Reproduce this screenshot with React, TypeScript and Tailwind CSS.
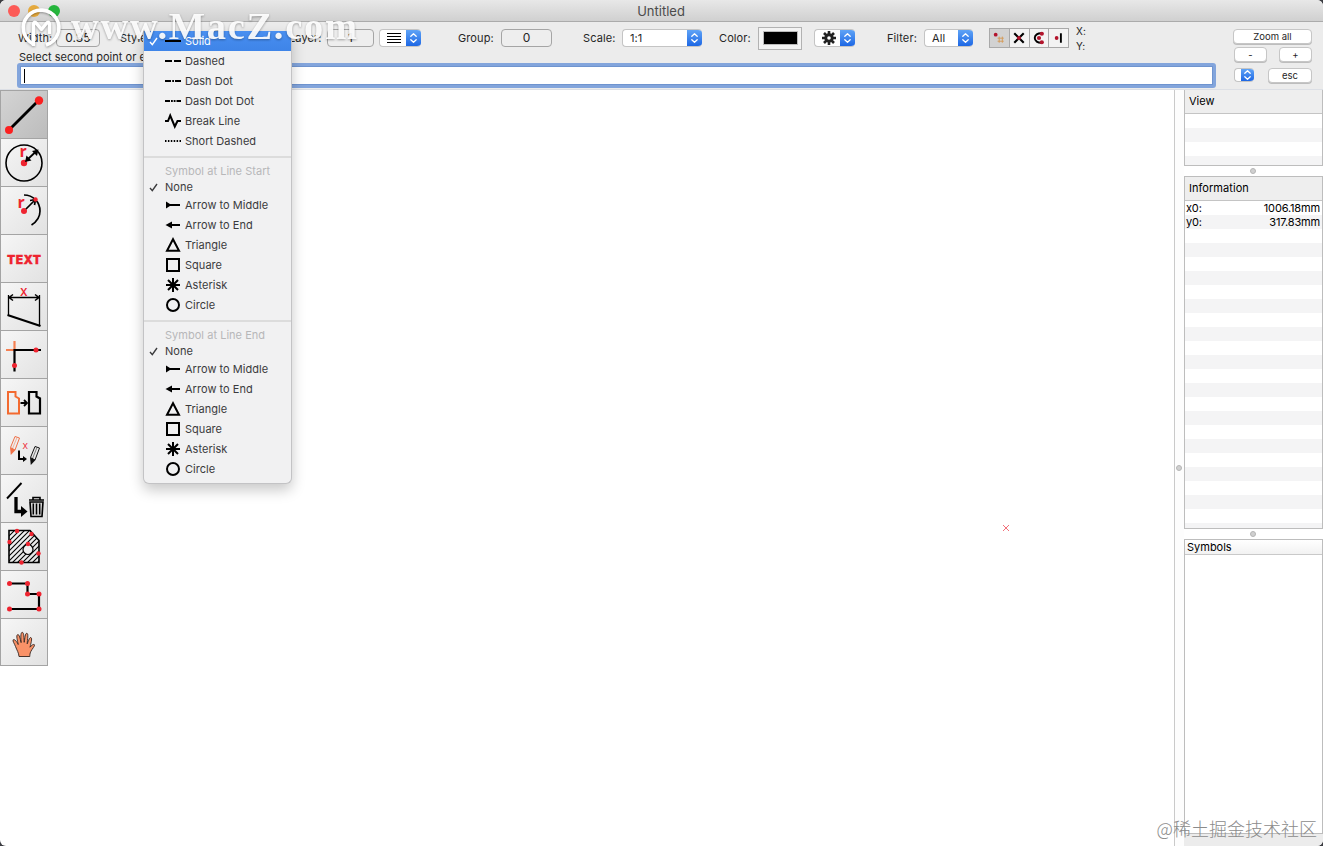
import type { ReactNode } from "react";
import clsx from "clsx";

const RED = "#ee2430";

/* ---------- Small controls ---------- */

const Chevrons = ({ className }: { className?: string }) => (
	<span
		className={clsx(
			"flex h-full shrink-0 items-center justify-center bg-gradient-to-b from-[#5fa3f6] to-[#1d67e4]",
			className
		)}>
		<svg width="9" height="12" viewBox="0 0 9 12" fill="none" stroke="#fff" strokeWidth="1.3">
			<path d="M1.8 4.3 4.5 1.8 7.2 4.3M1.8 7.7l2.7 2.5 2.7-2.5" strokeLinecap="round" strokeLinejoin="round" />
		</svg>
	</span>
);

const Popup = ({ children, className }: { children?: ReactNode; className?: string }) => (
	<div
		className={clsx(
			"flex h-[18px] shrink-0 items-center justify-between overflow-hidden rounded-[4px] border border-r-0 border-[#c4c4c4] bg-white",
			className
		)}>
		{children}
		<Chevrons className="w-[15px]" />
	</div>
);

const Field = ({ value, className }: { value: string; className?: string }) => (
	<div
		className={clsx(
			"flex h-[18px] shrink-0 items-center justify-center rounded-[4px] border border-[#a5a5a5] bg-[#eeeeee] text-[12px]",
			className
		)}>
		{value}
	</div>
);

const Label = ({ children, className }: { children: ReactNode; className?: string }) => (
	<span className={clsx("shrink-0 whitespace-nowrap", className)}>{children}</span>
);

const PushButton = ({ children, className }: { children: ReactNode; className?: string }) => (
	<button
		className={clsx(
			"flex h-[15px] items-center justify-center rounded-[4px] border border-[#c6c6c6] bg-white text-[9.5px] leading-none tracking-normal shadow-[0_1px_0_#bdbdbd]",
			className
		)}>
		{children}
	</button>
);

/* ---------- Snap buttons ---------- */

const snaps: ReactNode[] = [
	<g key="grid">
		<circle cx="6" cy="6" r="2" fill="#b3142c" />
		<path d="M9.7 8v6.5M13 8v6.5M8 9.7h6.5M8 12.9h6.5" stroke="#d59b58" strokeWidth="1" />
	</g>,
	<g key="cross">
		<path d="m4.500 4.500 10 10M14.500 4.500l-10 10" stroke="#000" strokeWidth="2.200" />
		<circle cx="9.5" cy="9.5" r="2.200" fill="#b3142c" />
	</g>,
	<g key="arc">
		<path d="M13 4.5C8 4 5 6.500 5 9.500s3 5.500 8 5" stroke="#000" strokeWidth="2" fill="none" />
		<g fill="#b3142c">
			<circle cx="12.500" cy="5" r="2.200" />
			<circle cx="9.500" cy="9.500" r="2.200" />
			<circle cx="12.500" cy="14" r="2.200" />
		</g>
	</g>,
	<g key="end">
		<circle cx="7" cy="9.500" r="2" fill="#b3142c" />
		<path d="M11.500 4.500v10" stroke="#000" strokeWidth="2" />
	</g>,
];

/* ---------- Drawing tools ---------- */

const Pencil = ({ color }: { color: string }) => (
	<>
		<path d="m5 1 4.500 1.500-4.500 12-4.500-2.500z" fill="none" stroke={color} strokeWidth="1" />
		<path d="M7 2 2.500 13" stroke={color} strokeWidth=".5" />
		<path d="m0 12 5.500 2.500L.800 19.500z" fill={color} />
	</>
);

const tools: { name: string; art: ReactNode }[] = [
	{
		name: "Line",
		art: (
			<>
				<path d="M9 38 39 8" stroke="#000" strokeWidth="2.800" />
				<circle cx="9" cy="38" r="4" fill="#fb2020" />
				<circle cx="39" cy="8.500" r="4.200" fill="#fb2020" />
			</>
		),
	},
	{
		name: "Circle",
		art: (
			<>
				<circle cx="24" cy="23" r="18" fill="none" stroke="#000" strokeWidth="1.600" />
				<circle cx="24" cy="23" r="3.200" fill={RED} />
				<path d="m27 20 9.500-9" stroke="#000" strokeWidth="1.800" />
				<path d="m25 22 1.500-6.500 5 5zM38.500 9.500l-6.500 1.500 5 5z" />
				<text x="19.500" y="17" fontSize="16" fontWeight="700" fill={RED} fontFamily="Open Sans, sans-serif">r</text>
			</>
		),
	},
	{
		name: "Arc",
		art: (
			<>
				<path d="M24 7c9 0 16 7 16 16 0 5.500-3 10.500-8.500 14" fill="none" stroke="#000" strokeWidth="1.700" />
				<circle cx="24" cy="23" r="3" fill={RED} />
				<path d="m26 21 9-9M30 12.500l5.500-1-1 5.500" fill="none" stroke="#000" strokeWidth="1.700" />
				<circle cx="35.500" cy="11.500" r="2.200" fill={RED} />
				<text x="17.500" y="19.500" fontSize="16" fontWeight="700" fill={RED} fontFamily="Open Sans, sans-serif">r</text>
			</>
		),
	},
	{
		name: "Text",
		art: (
			<text x="7" y="27.500" fontSize="12" fontWeight="900" fill={RED} stroke={RED} strokeWidth=".3" textLength="34" fontFamily="Inter, sans-serif">TEXT</text>
		),
	},
	{
		name: "Dimension",
		art: (
			<>
				<path d="M8.500 11v20M39.500 11v31" stroke="#000" strokeWidth="1.300" />
				<path d="M9 13.500h30M13 10.500l-4 3 4 3M35 10.500l4 3-4 3" fill="none" stroke="#000" strokeWidth="1.500" />
				<path d="m7.500 31 33 11" stroke="#000" strokeWidth="2.300" />
				<text x="20" y="11.500" fontSize="10.500" fontWeight="600" fill={RED} fontFamily="Inter, sans-serif">X</text>
			</>
		),
	},
	{
		name: "Trim",
		art: (
			<>
				<path d="M6 18h9M14.500 9v9" stroke="#f58052" strokeWidth="2.200" />
				<path d="M14.500 39.500V18H41" fill="none" stroke="#000" strokeWidth="2.200" />
				<circle cx="36" cy="18" r="2.500" fill={RED} />
				<circle cx="14.500" cy="33.500" r="2.500" fill={RED} />
			</>
		),
	},
	{
		name: "Move",
		art: (
			<>
				<path d="M8 12h7.500v4.500l3.500 2v15H8z" fill="none" stroke="#f36a30" strokeWidth="2" />
				<path d="M29 12h7.500v4.500l3.500 2v15H29z" fill="none" stroke="#000" strokeWidth="2.200" />
				<path d="M20.500 23h6m-2.500-3 3 3-3 3" fill="none" stroke="#000" strokeWidth="1.800" />
			</>
		),
	},
	{
		name: "Edit",
		art: (
			<>
				<g transform="translate(10 7.500)"><Pencil color="#ef7047" /></g>
				<g transform="translate(30 17.500)"><Pencil color="#111" /></g>
				<path d="M19 22.500V31h5" fill="none" stroke="#000" strokeWidth="2" />
				<path d="m23 28 4 3-4 3z" />
				<text x="22.500" y="21" fontSize="8" fill={RED} fontFamily="Inter, sans-serif">X</text>
			</>
		),
	},
	{
		name: "Delete",
		art: (
			<>
				<path d="M7 22.500 21.500 7" stroke="#000" strokeWidth="1.900" />
				<path d="M16 21v14.500h6" fill="none" stroke="#000" strokeWidth="3.300" />
				<path d="m21 30 6.500 5.500L21 41z" />
				<path d="M29 24h15M33 23.500v-2h7v2" fill="none" stroke="#000" strokeWidth="1.600" />
				<path d="M30 26h13l-1 14.500H31z" fill="#d5d5d5" stroke="#000" strokeWidth="1.600" />
				<path d="M33.300 27.500v11M36.500 27.500v11M39.700 27.500v11" stroke="#000" strokeWidth="1.500" />
			</>
		),
	},
	{
		name: "Hatch",
		art: (
			<>
				<defs>
					<clipPath id="hatch-area">
						<path d="M9 6.500h21l9 10v22H9z" />
					</clipPath>
				</defs>
				<g clipPath="url(#hatch-area)" stroke="#000" strokeWidth="1.100">
					<path d="M4 17 19 2M4 22 24 2M4 27 29 2M4 32 34 2M4 37 39 2M4 42 44 2M4 47 49 2M9 47 54 2M14 47 59 2M19 47 64 2M24 47 69 2M29 47 74 2M34 47 79 2" />
				</g>
				<path d="M9 6.500h21l9 10v22H9z" fill="none" stroke="#000" strokeWidth="1.600" />
				<circle cx="28" cy="25.500" r="5" fill="#eee" stroke="#000" strokeWidth="1.200" />
				<g fill={RED}>
					<circle cx="17" cy="7" r="2.200" />
					<circle cx="31.500" cy="10" r="2.200" />
					<circle cx="9.500" cy="18" r="2.200" />
					<circle cx="28" cy="20" r="2.200" />
					<circle cx="38.500" cy="29.500" r="2.200" />
					<circle cx="21.500" cy="38.500" r="2.200" />
				</g>
			</>
		),
	},
	{
		name: "Polyline",
		art: (
			<>
				<path d="M9 11.500h18.500V22H39v15H9" fill="none" stroke="#000" strokeWidth="2.200" />
				<g fill={RED}>
					<circle cx="9.500" cy="11.500" r="2.500" />
					<circle cx="27.500" cy="11.500" r="2.500" />
					<circle cx="27.500" cy="22" r="2.500" />
					<circle cx="39" cy="22" r="2.500" />
					<circle cx="39" cy="37" r="2.500" />
					<circle cx="9.500" cy="37" r="2.500" />
				</g>
			</>
		),
	},
	{
		name: "Pan",
		art: (
			<path
				transform="translate(0 -1)"
				d="M19 38.500c-.300-4-2-6-3.500-10-1-3-3.200-5.500-2.300-6.700 1.400-1 3.600 1.800 5 4.700-.700-4-2.300-9-.600-9.900 1.800-.400 2.500 4 3.500 8-.200-4-.800-10 1.100-10.300 1.900 0 1.700 6 2 10 .700-4 .900-9.300 2.700-9 1.800.500.500 6 .300 10.500 1.300-3 2.300-6.800 3.800-6.200 1.500.900-.200 6-1 9.600 1.300-1.500 3.200-3.500 4.400-2.500.700 1.200-2.200 4-3.600 6.800-.900 2-1 3.500-1 5z"
				fill="#f99268"
				stroke="#34251f"
				strokeWidth=".9"
			/>
		),
	},
];

/* ---------- Line style menu ---------- */

const strokes: Record<string, ReactNode> = {
	Solid: <path d="M0 8h16" />,
	Dashed: <path d="M0 8h7M9 8h7" />,
	"Dash Dot": <path d="M0 8h6M7.200 8h1.800M10 8h6" />,
	"Dash Dot Dot": <path d="M0 8h5M6 8h1.800M8.700 8h1.800M11.500 8H16" />,
	"Break Line": <path d="M0 8h3l2.200-5.500 4.600 11L12.500 8H16" />,
	"Short Dashed": <path d="M0 8h16" strokeDasharray="1.500 1.400" />,
	"Arrow to Middle": (
		<>
			<path d="M1 8h14" />
			<path d="M1 4.500 6.500 8 1 11.500z" fill="#000" stroke="none" />
		</>
	),
	"Arrow to End": (
		<>
			<path d="M3 8h12" />
			<path d="M.500 8 7 4.500v7z" fill="#000" stroke="none" />
		</>
	),
	Triangle: <path d="m8 2.200-6 11.500h12z" />,
	Square: <path d="M2 2h12v12H2z" />,
	Asterisk: <path d="M8 1v14M1 8h14M3 3l10 10M13 3 3 13" />,
	Circle: <circle cx="8" cy="8" r="6" />,
};

const lineStyles = ["Solid", "Dashed", "Dash Dot", "Dash Dot Dot", "Break Line", "Short Dashed"];
const lineSymbols = ["Arrow to Middle", "Arrow to End", "Triangle", "Square", "Asterisk", "Circle"];

const Check = () => (
	<svg className="shrink-0" width="9" height="9" viewBox="0 0 9 9" fill="none" stroke="currentColor" strokeWidth="1.400">
		<path d="m1 5 2.300 2.700L8 1" />
	</svg>
);

const MenuRow = ({ name, selected }: { name: string; selected?: boolean }) => (
	<li
		className={clsx(
			"flex h-5 items-center pl-[5px]",
			selected && "bg-gradient-to-b from-[#498ff0] to-[#3e84e8] text-white"
		)}>
		<span className="w-4">{selected && <Check />}</span>
		<svg className="mr-1 shrink-0" width="16" height="16" viewBox="0 0 16 16" fill="none" stroke="#000" strokeWidth="2">
			{strokes[name]}
		</svg>
		<span>{name}</span>
	</li>
);

const SymbolSection = ({ title }: { title: string }) => (
	<>
		<li className="flex h-3 items-center">
			<span className="h-[1.500px] w-full bg-[#dcdcdc]" />
		</li>
		<li className="flex h-4 items-center pl-[21px] text-[#b7b7b9]">{title}</li>
		<li className="flex h-4 items-center pl-[5px]">
			<span className="w-4">
				<Check />
			</span>
			None
		</li>
		{lineSymbols.map((name) => (
			<MenuRow key={name} name={name} />
		))}
	</>
);

const StyleMenu = () => (
	<ul className="absolute left-[143px] top-[31px] h-[453px] w-[149px] overflow-hidden rounded-b-[6px] border-x border-b border-[#c3c3c5] bg-[#f1f1f2] text-[11px] tracking-[0.03px] text-[#3b3b3d] shadow-[0_6px_14px_rgba(0,0,0,0.22)]">
		{lineStyles.map((name, i) => (
			<MenuRow key={name} name={name} selected={i === 0} />
		))}
		<SymbolSection title="Symbol at Line Start" />
		<SymbolSection title="Symbol at Line End" />
	</ul>
);

/* ---------- Window chrome ---------- */

const TitleBar = () => (
	<header className="flex h-[22px] items-center border-b border-[#ababab] bg-gradient-to-b from-[#e8e8e8] to-[#d0d0d0] pl-2">
		<div className="flex w-[52px] gap-2">
			<span className="size-3 rounded-full bg-[#fc5b57]" />
			<span className="size-3 rounded-full bg-[#e5a93c]" />
			<span className="size-3 rounded-full bg-[#25b53c]" />
		</div>
		<h1 className="flex-1 pr-[61px] pt-[2px] text-center text-[13px] text-[#4b4b4b]">Untitled</h1>
	</header>
);

const Toolbar = () => (
	<section className="flex h-[68px] border-b border-[#dcdfe5] bg-[#ececec] text-[11px] tracking-[0.1px] text-[#262626]">
		<div className="w-[1223px] pt-[3px]">
			<div className="flex h-[26px] items-center pl-[18px]">
				<Label className="w-[38px]">Width:</Label>
				<Field value="0.35" className="w-[44px]" />
				<Label className="ml-5 w-[169px]">Style:</Label>
				<Label className="w-[38px]">Layer:</Label>
				<Field value="1" className="w-[47px]" />
				<Popup className="ml-[5px] w-[42px]">
					<svg className="ml-[7px]" width="14" height="12" viewBox="0 0 14 12" stroke="#000" strokeWidth="1">
						<path d="M0 1.500h14M0 4.500h14M0 7.500h14M0 10.500h14" />
					</svg>
				</Popup>
				<Label className="ml-[37px] w-[43px]">Group:</Label>
				<Field value="0" className="w-[51px]" />
				<Label className="ml-[31px] w-[39px]">Scale:</Label>
				<Popup className="w-[80px]">
					<span className="ml-[7px]">1:1</span>
				</Popup>
				<Label className="ml-[17px] w-[39px]">Color:</Label>
				<div className="flex h-[23px] w-11 shrink-0 items-center justify-center border border-[#b2b2b2] bg-[#f3f3f3]">
					<div className="h-[14px] w-[35px] border border-[#bbb] bg-black" />
				</div>
				<Popup className="ml-3 w-[41px]">
					<svg className="ml-[6px]" width="16" height="16" viewBox="-8 -8 16 16">
						<g stroke="#222" strokeWidth="2.600">
							<path d="M0-7V7M-7 0H7M-5-5 5 5M5-5-5 5" />
						</g>
						<circle r="4.700" fill="#222" />
						<circle r="1.800" fill="#fff" />
					</svg>
				</Popup>
				<Label className="ml-8 w-[37px]">Filter:</Label>
				<Popup className="w-[49px]">
					<span className="ml-[7px]">All</span>
				</Popup>
				<div className="ml-4 flex h-5 w-20 shrink-0 border-l border-[#a9a9a9]">
					{snaps.map((art, i) => (
						<span
							key={i}
							className={clsx(
								"flex flex-1 items-center justify-center border-y border-r border-[#a9a9a9]",
								i === 0 ? "bg-[#d2d2d2]" : "bg-[#f3f3f3]"
							)}>
							<svg width="18" height="18" viewBox="0 0 19 19">{art}</svg>
						</span>
					))}
				</div>
				<div className="ml-[7px] pt-[2px] text-[10px] leading-[15px]">
					<p>X:</p>
					<p>Y:</p>
				</div>
			</div>
			<p className="h-3 pl-[19px] leading-[12px] tracking-[0.02px]">Select second point or enter a value</p>
			<div className="ml-[17px] flex h-[25px] w-[1199px] items-center rounded-[3px] border-[3px] border-[#83a5dc] bg-white">
				<div className="flex h-full w-full items-center border border-[#6f94cf] pl-[3px]">
					<span className="h-[14px] w-px bg-black" />
				</div>
			</div>
		</div>
		<div className="ml-[10px] w-[79px] pt-[7px]">
			<PushButton className="w-full">Zoom all</PushButton>
			<div className="mt-[3px] flex justify-between pl-px">
				<PushButton className="w-[33px]">-</PushButton>
				<PushButton className="w-[33px]">+</PushButton>
			</div>
			<div className="mt-[6px] flex justify-between pl-px">
				<div className="flex h-[14px] w-5 justify-end overflow-hidden rounded-[4px] border border-r-0 border-[#c4c4c4] bg-white">
					<Chevrons className="w-[13px]" />
				</div>
				<PushButton className="w-11">esc</PushButton>
			</div>
		</div>
	</section>
);

const ToolPalette = () => (
	<nav className="w-12 shrink-0 self-start border-b border-r border-[#a4a4a4]">
		{tools.map(({ name, art }, i) => (
			<button
				key={name}
				aria-label={name}
				className={clsx(
					"block w-full border-l border-t border-[#a4a4a4]",
					i === tools.length - 1 ? "h-[47px]" : "h-12",
					i === 0
						? "bg-gradient-to-br from-[#d4d4d4] to-[#bcbcbc]"
						: "bg-gradient-to-br from-[#f6f6f6] to-[#e2e2e2]"
				)}>
				<svg className="-ml-px" width="48" height="46" viewBox="0 0 48 46">{art}</svg>
			</button>
		))}
	</nav>
);

/* ---------- Side panels ---------- */

const Grip = () => (
	<div className="flex h-[10px] items-center justify-center pr-[2px]">
		<span className="size-[6px] rounded-full border border-[#b5b5b5] bg-[#d0d0d0]" />
	</div>
);

const Rows = ({ count, values = [] }: { count: number; values?: string[][] }) => (
	<div className="flex-1 overflow-hidden">
		{Array.from({ length: count }, (_, i) => (
			<div key={i} className="flex h-[14px] items-center justify-between pl-px pr-[2px] tracking-[-0.15px] odd:bg-white even:bg-[#f4f4f5]">
				{values[i]?.map((text) => <span key={text}>{text}</span>)}
			</div>
		))}
	</div>
);

const SidePanels = () => (
	<aside className="flex w-[139px] flex-col text-[11px] text-black">
		<section className="flex h-[76px] flex-col border border-t-0 border-[#bdbdbd]">
			<h2 className="flex h-[24px] shrink-0 items-center border-b border-[#c4c4c4] bg-[#eeeeee] pl-1">View</h2>
			<Rows count={4} />
		</section>
		<Grip />
		<section className="flex h-[353px] flex-col border border-[#bdbdbd]">
			<h2 className="flex h-[24px] shrink-0 items-center border-b border-[#c4c4c4] bg-[#eeeeee] pl-1 tracking-[0.05px]">Information</h2>
			<Rows
				count={24}
				values={[
					["x0:", "1006.18mm"],
					["y0:", "317.83mm"],
				]}
			/>
		</section>
		<Grip />
		<section className="flex h-[295px] flex-col border border-[#bdbdbd] bg-white">
			<h2 className="flex h-[15px] shrink-0 items-center border-b border-[#c9c9c9] bg-gradient-to-b from-white to-[#f2f2f2] pl-[2px]">
				Symbols
			</h2>
		</section>
		<div className="flex-1 bg-[#ececec]" />
	</aside>
);

/* ---------- Overlays ---------- */

const SiteMark = () => (
	<svg className="pointer-events-none absolute left-0 top-0 drop-shadow-[0_1px_1px_rgba(0,0,0,0.35)]" width="380" height="60" viewBox="0 0 380 60">
		<path d="M33.500 44A17.800 17.800 0 1 1 46 45" fill="none" stroke="#fff" strokeWidth="3.600" />
		<path d="M33.500 46V24.500c0-2.500 1.500-3 3-1.200l5 6.200 5-6.200c1.500-1.800 3-1.300 3 1.200V34" fill="none" stroke="#fff" strokeWidth="3.400" strokeLinejoin="round" />
		<text x="71" y="39" fontSize="38.500" fontWeight="700" fill="#fff" fillOpacity=".92" textLength="286" fontFamily="Liberation Serif, serif">
			www.MacZ.com
		</text>
	</svg>
);

const App = () => {
	return (
		<div className="h-[846px] w-[1323px] overflow-hidden bg-[#3c3d42] font-['Inter',sans-serif]">
			<main className="relative flex h-full flex-col overflow-hidden rounded-[6px] bg-white">
				<TitleBar />
				<Toolbar />
				<div className="flex flex-1">
					<ToolPalette />
					<div className="relative flex-1">
						<svg className="absolute left-[954px] top-[434px]" width="8" height="8" viewBox="0 0 8 8" stroke="#f2707a">
							<path d="m1 1 6 6M7 1 1 7" />
						</svg>
					</div>
					<div className="flex w-[10px] items-center justify-center border-l border-[#cacaca] bg-[#fdfdfd] pr-[2px]">
						<span className="size-[6px] rounded-full border border-[#b5b5b5] bg-[#d0d0d0]" />
					</div>
					<SidePanels />
				</div>
				<StyleMenu />
				<SiteMark />
				<p className="absolute bottom-[5px] right-[6px] whitespace-nowrap font-['Noto_Sans_CJK_SC',sans-serif] text-[18px] font-light leading-[26px] text-[#8b8b8b]">
					@稀土掘金技术社区
				</p>
			</main>
		</div>
	);
};

export default App;
